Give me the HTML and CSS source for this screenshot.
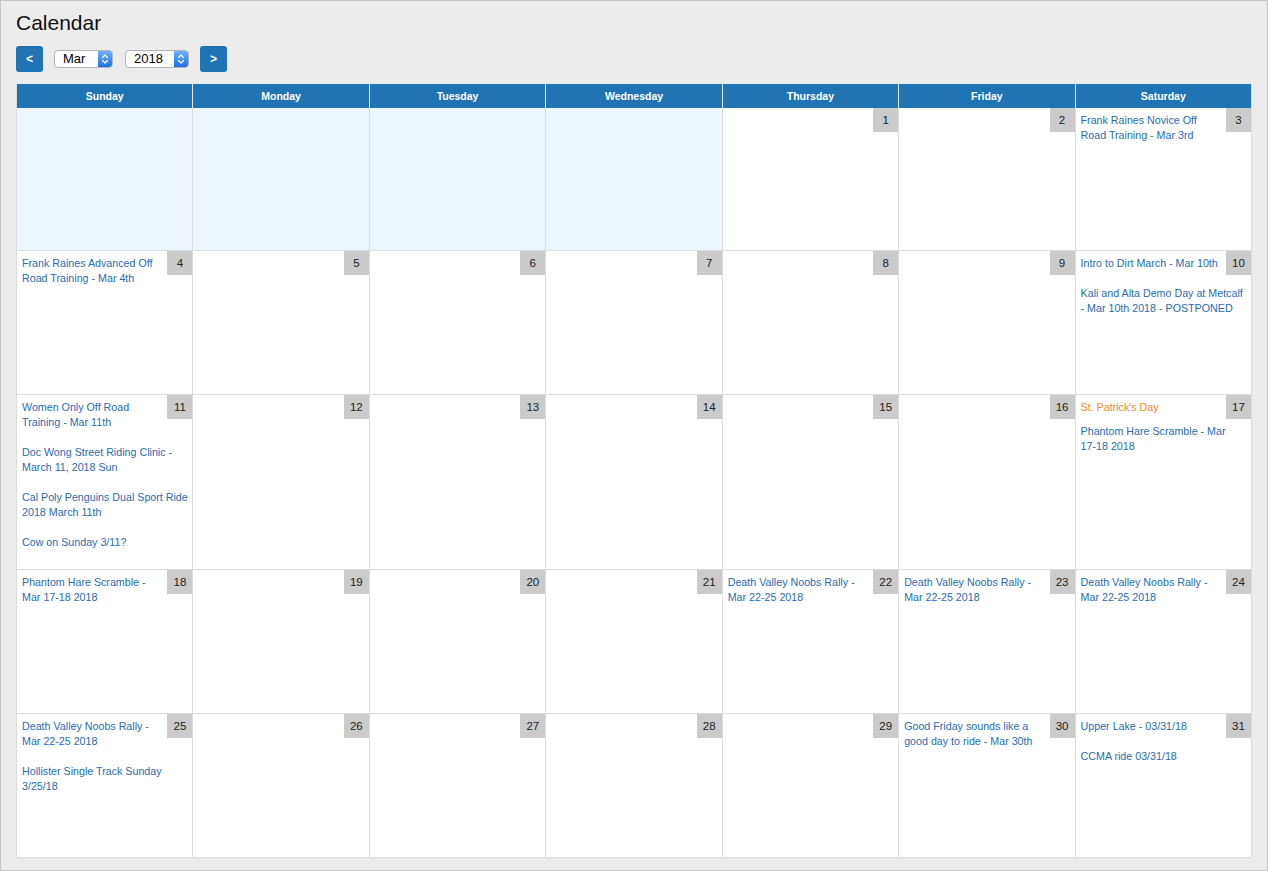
FILE: index.html
```html
<!DOCTYPE html>
<html lang="en">
<head>
  <meta charset="UTF-8" />
  <title>Calendar</title>
  <link rel="stylesheet" href="styles.css">
</head>
<body>
<div class="page">
  <h1>Calendar</h1>

  <div class="toolbar">
    <button class="nav-btn">&lt;</button>
    <div class="select select-month">
      <span class="select-value">Mar</span>
      <span class="stepper">
        <svg width="8" height="12" viewBox="0 0 8 12"><path d="M1.5 4.5 L4 2 L6.5 4.5 M1.5 7.5 L4 10 L6.5 7.5" fill="none" stroke="#fff" stroke-width="1.3" stroke-linecap="round" stroke-linejoin="round"/></svg>
      </span>
    </div>
    <div class="select select-year">
      <span class="select-value">2018</span>
      <span class="stepper">
        <svg width="8" height="12" viewBox="0 0 8 12"><path d="M1.5 4.5 L4 2 L6.5 4.5 M1.5 7.5 L4 10 L6.5 7.5" fill="none" stroke="#fff" stroke-width="1.3" stroke-linecap="round" stroke-linejoin="round"/></svg>
      </span>
    </div>
    <button class="nav-btn">&gt;</button>
  </div>

  <div class="calendar">
    <div class="head">Sunday</div>
    <div class="head">Monday</div>
    <div class="head">Tuesday</div>
    <div class="head">Wednesday</div>
    <div class="head">Thursday</div>
    <div class="head">Friday</div>
    <div class="head">Saturday</div>

    <!-- week 1 -->
    <div class="day other first-week"></div>
    <div class="day other first-week"></div>
    <div class="day other first-week"></div>
    <div class="day other first-week"></div>
    <div class="day first-week"><span class="num">1</span><div class="events"></div></div>
    <div class="day first-week"><span class="num">2</span><div class="events"></div></div>
    <div class="day first-week"><span class="num">3</span><div class="events">
      <a class="event">Frank Raines Novice Off Road Training - Mar 3rd</a>
    </div></div>

    <!-- week 2 -->
    <div class="day"><span class="num">4</span><div class="events">
      <a class="event">Frank Raines Advanced Off Road Training - Mar 4th</a>
    </div></div>
    <div class="day"><span class="num">5</span><div class="events"></div></div>
    <div class="day"><span class="num">6</span><div class="events"></div></div>
    <div class="day"><span class="num">7</span><div class="events"></div></div>
    <div class="day"><span class="num">8</span><div class="events"></div></div>
    <div class="day"><span class="num">9</span><div class="events"></div></div>
    <div class="day"><span class="num">10</span><div class="events">
      <a class="event">Intro to Dirt March - Mar 10th</a>
      <a class="event">Kali and Alta Demo Day at Metcalf - Mar 10th 2018 - POSTPONED</a>
    </div></div>

    <!-- week 3 -->
    <div class="day"><span class="num">11</span><div class="events">
      <a class="event">Women Only Off Road Training - Mar 11th</a>
      <a class="event">Doc Wong Street Riding Clinic - March 11, 2018 Sun</a>
      <a class="event">Cal Poly Penguins Dual Sport Ride 2018 March 11th</a>
      <a class="event">Cow on Sunday 3/11?</a>
    </div></div>
    <div class="day"><span class="num">12</span><div class="events"></div></div>
    <div class="day"><span class="num">13</span><div class="events"></div></div>
    <div class="day"><span class="num">14</span><div class="events"></div></div>
    <div class="day"><span class="num">15</span><div class="events"></div></div>
    <div class="day"><span class="num">16</span><div class="events"></div></div>
    <div class="day"><span class="num">17</span><div class="events">
      <span class="event holiday">St. Patrick's Day</span>
      <a class="event">Phantom Hare Scramble - Mar <span class="nowrap">17-18</span> 2018</a>
    </div></div>

    <!-- week 4 -->
    <div class="day"><span class="num">18</span><div class="events">
      <a class="event">Phantom Hare Scramble - Mar 17-18 2018</a>
    </div></div>
    <div class="day"><span class="num">19</span><div class="events"></div></div>
    <div class="day"><span class="num">20</span><div class="events"></div></div>
    <div class="day"><span class="num">21</span><div class="events"></div></div>
    <div class="day"><span class="num">22</span><div class="events">
      <a class="event">Death Valley Noobs Rally - Mar 22-25 2018</a>
    </div></div>
    <div class="day"><span class="num">23</span><div class="events">
      <a class="event">Death Valley Noobs Rally - Mar 22-25 2018</a>
    </div></div>
    <div class="day"><span class="num">24</span><div class="events">
      <a class="event">Death Valley Noobs Rally - Mar 22-25 2018</a>
    </div></div>

    <!-- week 5 -->
    <div class="day"><span class="num">25</span><div class="events">
      <a class="event">Death Valley Noobs Rally - Mar 22-25 2018</a>
      <a class="event">Hollister Single Track Sunday 3/25/18</a>
    </div></div>
    <div class="day"><span class="num">26</span><div class="events"></div></div>
    <div class="day"><span class="num">27</span><div class="events"></div></div>
    <div class="day"><span class="num">28</span><div class="events"></div></div>
    <div class="day"><span class="num">29</span><div class="events"></div></div>
    <div class="day"><span class="num">30</span><div class="events">
      <a class="event">Good Friday sounds like a good day to ride - Mar 30th</a>
    </div></div>
    <div class="day"><span class="num">31</span><div class="events">
      <a class="event">Upper Lake - 03/31/18</a>
      <a class="event">CCMA ride 03/31/18</a>
    </div></div>
  </div>
</div>
</body>
</html>
```

FILE: styles.css
```css
html, body {
  margin: 0;
  padding: 0;
}

body {
  font-family: "Liberation Sans", Arial, Helvetica, sans-serif;
  color: #222;
}

.page {
  box-sizing: border-box;
  width: 1268px;
  height: 871px;
  border: 1px solid #c6c6c6;
  background: #ececec;
  padding: 10px 15px 0 15px;
}

h1 {
  font-size: 21px;
  font-weight: normal;
  line-height: 24px;
  margin: 0;
  color: #111;
}

.toolbar {
  display: flex;
  align-items: center;
  height: 26px;
  margin-top: 11px;
  margin-bottom: 12px;
}

.nav-btn {
  width: 27px;
  height: 26px;
  padding: 0;
  border: none;
  border-radius: 3px;
  background: #2174b3;
  color: #fff;
  font-family: inherit;
  font-size: 12px;
  font-weight: bold;
  cursor: pointer;
}

.select {
  display: flex;
  align-items: stretch;
  box-sizing: border-box;
  height: 18px;
  border: 1px solid #b4b4b4;
  border-radius: 4px;
  background: #fff;
  overflow: hidden;
}

.select-month {
  width: 59px;
  margin: 0 12px 0 11px;
}

.select-year {
  width: 64px;
  margin-right: 11px;
}

.select-value {
  flex: 1;
  padding-left: 8px;
  font-size: 13px;
  line-height: 16px;
  color: #000;
}

.stepper {
  width: 14px;
  display: flex;
  align-items: center;
  justify-content: center;
  background: linear-gradient(#6cb3fa, #1a6fe6);
}

.calendar {
  display: grid;
  grid-template-columns: repeat(7, 1fr);
  width: 1236px;
  box-sizing: border-box;
  border-left: 1px solid #dcdcdc;
}

.head {
  height: 24px;
  line-height: 24px;
  background: #2174b3;
  color: #fff;
  font-size: 10.5px;
  font-weight: bold;
  text-align: center;
  border-right: 1px solid #dfe8f1;
}

.head:nth-child(7) {
  border-right-color: #dcdcdc;
}

.day {
  box-sizing: border-box;
  min-height: 144px;
  background: #fff;
  border-right: 1px solid #dcdcdc;
  border-bottom: 1px solid #dcdcdc;
}

.day.first-week {
  min-height: 143px;
}

.day.other {
  background: #edf5fd;
}

.num {
  float: right;
  width: 25px;
  height: 24px;
  margin-left: 8px;
  line-height: 24px;
  text-align: center;
  background: #cbcbcb;
  font-size: 11.5px;
  color: #222;
}

.events {
  padding: 5px 3px 4px 5px;
}

.event {
  display: block;
  font-size: 10.7px;
  line-height: 15px;
  color: #2a6cb0;
  margin-bottom: 15px;
  text-decoration: none;
  cursor: pointer;
}

.event.holiday {
  color: #f2891f;
  margin-bottom: 9px;
  cursor: default;
}

.nowrap {
  white-space: nowrap;
}
```
